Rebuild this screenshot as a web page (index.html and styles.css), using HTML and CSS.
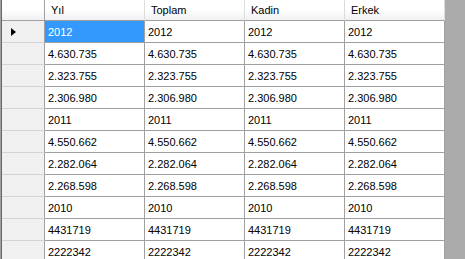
FILE: index.html
```html
<!DOCTYPE html>
<html lang="en">
<head>
    <meta charset="UTF-8">
    <title>DataGridView</title>
    <link rel="stylesheet" href="styles.css">
</head>
<body>
    <div class="frame">
        <div class="view">
            <div class="grid">
                <div class="corner"></div>
                <div class="col-head">Yıl</div>
                <div class="col-head">Toplam</div>
                <div class="col-head">Kadin</div>
                <div class="col-head">Erkek</div>

                <div class="row-head current"><span class="arrow"></span></div>
                <div class="cell selected">2012</div><div class="cell">2012</div><div class="cell">2012</div><div class="cell">2012</div>

                <div class="row-head"></div>
                <div class="cell">4.630.735</div><div class="cell">4.630.735</div><div class="cell">4.630.735</div><div class="cell">4.630.735</div>

                <div class="row-head"></div>
                <div class="cell">2.323.755</div><div class="cell">2.323.755</div><div class="cell">2.323.755</div><div class="cell">2.323.755</div>

                <div class="row-head"></div>
                <div class="cell">2.306.980</div><div class="cell">2.306.980</div><div class="cell">2.306.980</div><div class="cell">2.306.980</div>

                <div class="row-head"></div>
                <div class="cell">2011</div><div class="cell">2011</div><div class="cell">2011</div><div class="cell">2011</div>

                <div class="row-head"></div>
                <div class="cell">4.550.662</div><div class="cell">4.550.662</div><div class="cell">4.550.662</div><div class="cell">4.550.662</div>

                <div class="row-head"></div>
                <div class="cell">2.282.064</div><div class="cell">2.282.064</div><div class="cell">2.282.064</div><div class="cell">2.282.064</div>

                <div class="row-head"></div>
                <div class="cell">2.268.598</div><div class="cell">2.268.598</div><div class="cell">2.268.598</div><div class="cell">2.268.598</div>

                <div class="row-head"></div>
                <div class="cell">2010</div><div class="cell">2010</div><div class="cell">2010</div><div class="cell">2010</div>

                <div class="row-head"></div>
                <div class="cell">4431719</div><div class="cell">4431719</div><div class="cell">4431719</div><div class="cell">4431719</div>

                <div class="row-head"></div>
                <div class="cell">2222342</div><div class="cell">2222342</div><div class="cell">2222342</div><div class="cell">2222342</div>
            </div>
        </div>
    </div>
</body>
</html>
```

FILE: styles.css
```css
html, body {
    height: 100%;
}
body {
    margin: 0;
    background-color: #ababab;
    font-family: 'Liberation Sans', Arial, sans-serif;
    font-size: 11px;
    color: #000;
    overflow: hidden;
}
.frame {
    width: 444px;
    border-left: 1px solid #a0a0a0;
}
.view {
    border-left: 1px solid #696969;
    background: #fff;
}
.grid {
    display: grid;
    grid-template-columns: 43px repeat(4, 100px);
    grid-template-rows: 21px;
    grid-auto-rows: 22px;
}
.grid > div {
    box-sizing: border-box;
    display: flex;
    align-items: center;
}
.corner,
.col-head {
    background: linear-gradient(to bottom, #ffffff 45%, #f0f1f3 100%);
    border-bottom: 1px solid #a0a0a0;
}
.corner {
    border-right: 1px solid #a0a0a0;
}
.col-head {
    border-right: 1px solid #dcdde0;
    padding-left: 6px;
    padding-bottom: 1px;
}
.row-head {
    background-color: #f0f0f0;
    border-right: 1px solid #a0a0a0;
    border-bottom: 1px solid #d4d4d4;
}
.arrow {
    width: 0;
    height: 0;
    margin-left: 9px;
    border-top: 4.5px solid transparent;
    border-bottom: 4.5px solid transparent;
    border-left: 5px solid #000;
}
.cell {
    background: #fff;
    border-right: 1px solid #a0a0a0;
    border-bottom: 1px solid #a0a0a0;
    padding-left: 3px;
    white-space: nowrap;
}
.cell.selected {
    background-color: #3399ff;
    color: #fff;
}
```
